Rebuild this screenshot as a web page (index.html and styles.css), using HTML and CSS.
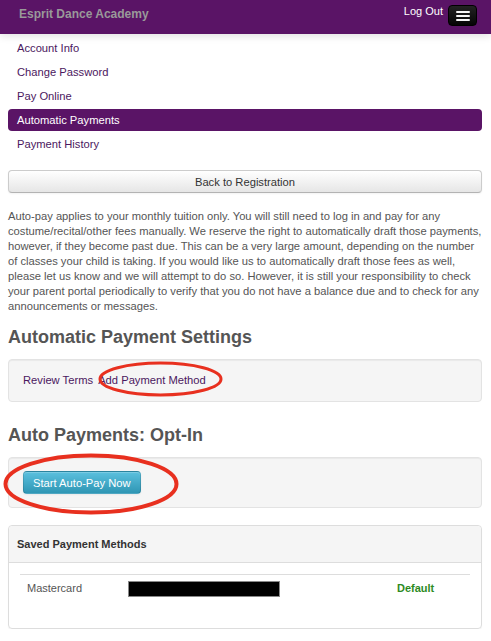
FILE: index.html
```html
<!DOCTYPE html>
<html lang="en">
<head>
    <meta charset="UTF-8">
    <meta name="viewport" content="width=device-width, initial-scale=1.0">
    <title>Automatic Payments</title>
    <link rel="stylesheet" href="styles.css">
</head>
<body>
    <div class="navbar">
        <span class="brand">Esprit Dance Academy</span>
        <div class="nav-right">
            <a class="logout" href="#">Log Out</a>
            <button class="nav-toggle" type="button">
                <span class="bar"></span>
                <span class="bar"></span>
                <span class="bar"></span>
            </button>
        </div>
    </div>

    <div class="container">
        <ul class="nav-list">
            <li><a href="#">Account Info</a></li>
            <li><a href="#">Change Password</a></li>
            <li><a href="#">Pay Online</a></li>
            <li class="active"><a href="#">Automatic Payments</a></li>
            <li><a href="#">Payment History</a></li>
        </ul>

        <button class="btn btn-block" type="button">Back to Registration</button>

        <p class="notice">Auto-pay applies to your monthly tuition only. You will still need to log in and pay for any costume/recital/other fees manually. We reserve the right to automatically draft those payments, however, if they become past due. This can be a very large amount, depending on the number of classes your child is taking. If you would like us to automatically draft those fees as well, please let us know and we will attempt to do so. However, it is still your responsibility to check your parent portal periodically to verify that you do not have a balance due and to check for any announcements or messages.</p>

        <h3>Automatic Payment Settings</h3>
        <div class="well">
            <a href="#">Review Terms</a> <a class="add-method" href="#">Add Payment Method</a>
            <!-- annotation circle -->
            <svg class="circle circle-add" width="125" height="36" viewBox="0 0 125 36">
                <ellipse cx="62.5" cy="18" rx="60.5" ry="16" fill="none" stroke="#e8301f" stroke-width="3"/>
            </svg>
        </div>

        <h3>Auto Payments: Opt-In</h3>
        <div class="well">
            <button class="btn btn-info" type="button">Start Auto-Pay Now</button>
            <svg class="circle circle-start" width="176" height="62" viewBox="0 0 176 62">
                <ellipse cx="88" cy="31" rx="85.5" ry="28.5" fill="none" stroke="#e8301f" stroke-width="4"/>
            </svg>
        </div>

        <div class="panel">
            <div class="panel-heading">Saved Payment Methods</div>
            <div class="panel-body">
                <table class="methods">
                    <tr>
                        <td class="col-type">Mastercard</td>
                        <td class="col-number"><span class="redacted"></span></td>
                        <td class="col-status">Default</td>
                    </tr>
                </table>
            </div>
        </div>
    </div>
</body>
</html>
```

FILE: styles.css
```css
body {
    margin: 0;
    font-family: "Liberation Sans", Arial, sans-serif;
    font-size: 11.2px;
    line-height: 15px;
    color: #555;
    background-color: #fff;
}

a {
    color: #4b1760;
    text-decoration: none;
}

.navbar {
    display: flex;
    justify-content: space-between;
    height: 34px;
    padding: 0 14px 0 19px;
    background-color: #5a1466;
    box-shadow: 0 2px 8px rgba(0, 0, 0, 0.12);
}

.brand {
    padding-top: 7px;
    font-size: 12px;
    font-weight: bold;
    color: #999;
}

.nav-right {
    display: flex;
    align-items: flex-start;
}

.logout {
    margin-top: 4px;
    margin-right: 5px;
    font-size: 11px;
    color: #fff;
}

.nav-toggle {
    display: flex;
    flex-direction: column;
    align-items: center;
    justify-content: center;
    gap: 2px;
    width: 29px;
    height: 21px;
    margin-top: 5px;
    padding: 0;
    border: 1px solid #000;
    border-radius: 4px;
    background: linear-gradient(#222, #050505);
}

.nav-toggle .bar {
    display: block;
    width: 14px;
    height: 2px;
    border-radius: 1px;
    background-color: #f5f5f5;
}

.container {
    padding: 0 9px 0 8px;
}

.nav-list {
    list-style: none;
    margin: 0;
    padding: 3px 0 0;
}

.nav-list li {
    margin-bottom: 2px;
}

.nav-list a {
    display: block;
    height: 22px;
    line-height: 22px;
    padding: 0 9px;
    border-radius: 4px;
}

.nav-list .active a {
    background-color: #5a1466;
    color: #fff;
}

.btn {
    display: inline-block;
    height: 23px;
    padding: 0 9px;
    font-family: inherit;
    font-size: 11.2px;
    color: #333;
    border: 1px solid #ccc;
    border-bottom-color: #b3b3b3;
    border-radius: 4px;
    background: linear-gradient(#fff, #e6e6e6);
    box-shadow: inset 0 1px 0 rgba(255, 255, 255, 0.2), 0 1px 2px rgba(0, 0, 0, 0.05);
}

.btn-block {
    display: block;
    width: 100%;
    margin-top: 15px;
}

.btn-info {
    color: #fff;
    border-color: rgba(0, 0, 0, 0.12);
    background: linear-gradient(#5bc0de, #2f96b4);
}

.notice {
    margin: 16px 0 0;
}

h3 {
    margin: 11px 0 0;
    font-size: 18px;
    line-height: 24px;
    color: #555;
}

.well {
    position: relative;
    margin-top: 10px;
    padding: 13px 14px;
    background-color: #f5f5f5;
    border: 1px solid #e3e3e3;
    border-radius: 4px;
    box-shadow: inset 0 1px 1px rgba(0, 0, 0, 0.05);
}

.well + h3 {
    margin-top: 21px;
}

.well .btn-info {
    vertical-align: top;
}

.add-method {
    margin-left: 2px;
}

.circle {
    position: absolute;
}

.circle-add {
    left: 89px;
    top: 1px;
}

.circle-start {
    left: -6px;
    top: -5px;
}

.panel {
    margin-top: 17px;
    border: 1px solid #ddd;
    border-radius: 4px;
    box-shadow: 0 1px 1px rgba(0, 0, 0, 0.05);
}

.panel-heading {
    height: 36px;
    padding: 0 8px;
    line-height: 36px;
    font-size: 11px;
    font-weight: bold;
    color: #333;
    background-color: #f5f5f5;
    border-bottom: 1px solid #ddd;
    border-radius: 4px 4px 0 0;
}

.panel-body {
    height: 54px;
    padding: 11px 11px 0;
}

.methods {
    width: 100%;
    border-collapse: collapse;
}

.methods td {
    padding: 6px 7px;
    border-top: 1px solid #ddd;
    font-size: 11px;
    vertical-align: top;
}

.col-type {
    width: 88px;
    color: #555;
}

.col-number {
    width: 254px;
}

.col-status {
    padding-top: 8px;
    font-weight: bold;
    color: #2e8b1f;
}

.redacted {
    display: block;
    width: 150px;
    height: 14px;
    margin-top: 1px;
    background-color: #000;
    outline: 1px solid #888;
}
```
